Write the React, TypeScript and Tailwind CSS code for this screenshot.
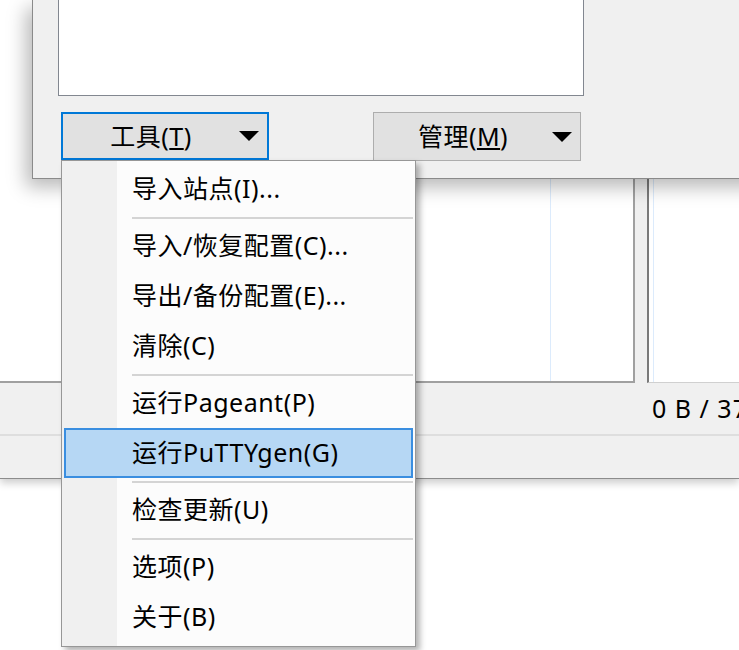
import React from "react";

type Entry = { label?: string; sep?: boolean; active?: boolean };

const menu: Entry[] = [
  { label: "导入站点(I)..." },
  { sep: true },
  { label: "导入/恢复配置(C)..." },
  { label: "导出/备份配置(E)..." },
  { label: "清除(C)" },
  { sep: true },
  { label: "运行Pageant(P)" },
  { label: "运行PuTTYgen(G)", active: true },
  { sep: true },
  { label: "检查更新(U)" },
  { sep: true },
  { label: "选项(P)" },
  { label: "关于(B)" },
];

function Arrow() {
  return (
    <svg width="20" height="10" viewBox="0 0 20 10" className="shrink-0">
      <polygon points="0,0 20,0 10,10" fill="#000" />
    </svg>
  );
}

function DropButton({ text, hotkey, focused }: { text: string; hotkey: string; focused?: boolean }) {
  return (
    <div
      className={
        focused
          ? "flex h-[48px] w-[208px] items-center border-2 border-[#0078d7] bg-[#e1e1e1] pr-[8px]"
          : "flex h-[49px] w-[208px] items-center border border-[#adadad] bg-[#e1e1e1] pr-[8px]"
      }
    >
      <span className="flex-1 text-center text-[25px] leading-none tracking-[0.5px]">
        {text}(<span className="underline underline-offset-2">{hotkey}</span>)
      </span>
      <Arrow />
    </div>
  );
}

function ToolsMenu() {
  return (
    <div className="absolute left-[61px] top-[160px] w-[355px] border border-[#979797] bg-[linear-gradient(to_right,#f0f0f0_55px,#fcfcfc_55px)] pt-[3px] pb-[4px] shadow-[4px_4px_6px_rgba(0,0,0,0.3)]">
      {menu.map((m, i) =>
        m.sep ? (
          <div key={i} className="flex h-[7px] items-center pl-[70px] pr-[2px]">
            <div className="h-[2px] flex-1 bg-[#d4d4d4]" />
          </div>
        ) : (
          <div
            key={i}
            className={
              m.active
                ? "mx-[2px] flex h-[50px] items-center border-2 border-[#3a8ee0] bg-[#b6d7f4] pl-[66px] text-[25px] tracking-[0.5px]"
                : "mx-[2px] flex h-[50px] items-center border-2 border-transparent pl-[66px] text-[25px] tracking-[0.5px]"
            }
          >
            {m.label}
          </div>
        )
      )}
    </div>
  );
}

export default function App() {
  return (
    <div className="relative h-[650px] w-[739px] overflow-hidden bg-white font-['Noto_Sans','Noto_Sans_CJK_SC',sans-serif] text-black">
      {/* main window behind the dialog */}
      <div className="flex h-[479px] flex-col border-b border-[#8c8c8c] bg-[#f0f0f0] shadow-[0_4px_8px_rgba(0,0,0,0.2)]">
        <div className="flex h-[383px]">
          <div className="flex w-[635px] border-r-2 border-b-2 border-[#a0a0a0] bg-white">
            <div className="w-[551px] border-r border-[#dcebfc]" />
          </div>
          <div className="w-[12px]" />
          <div className="flex flex-1 border-l-2 border-b border-l-[#7a7a7a] border-b-[#d0d0d0] bg-white">
            <div className="w-[5px] border-r border-[#dcebfc]" />
          </div>
        </div>
        <div className="flex h-[53px] items-center border-b-2 border-[#dedede] pl-[652px]">
          <span className="whitespace-nowrap text-[25px] tracking-[1px]">0 B / 37 KB</span>
        </div>
        <div className="flex-1" />
      </div>

      {/* dialog on top */}
      <div className="absolute left-[32px] top-0 h-[179px] w-[740px] border-l border-b border-[#8a8a8a] bg-[#f0f0f0] pl-[25px] shadow-[-6px_8px_18px_rgba(0,0,0,0.28)]">
        <div className="h-[96px] w-[526px] border-x border-b border-[#828790] bg-white" />
        <div className="mt-[16px] ml-[3px] flex gap-[104px]">
          <DropButton text="工具" hotkey="T" focused />
          <DropButton text="管理" hotkey="M" />
        </div>
      </div>

      <ToolsMenu />
    </div>
  );
}
